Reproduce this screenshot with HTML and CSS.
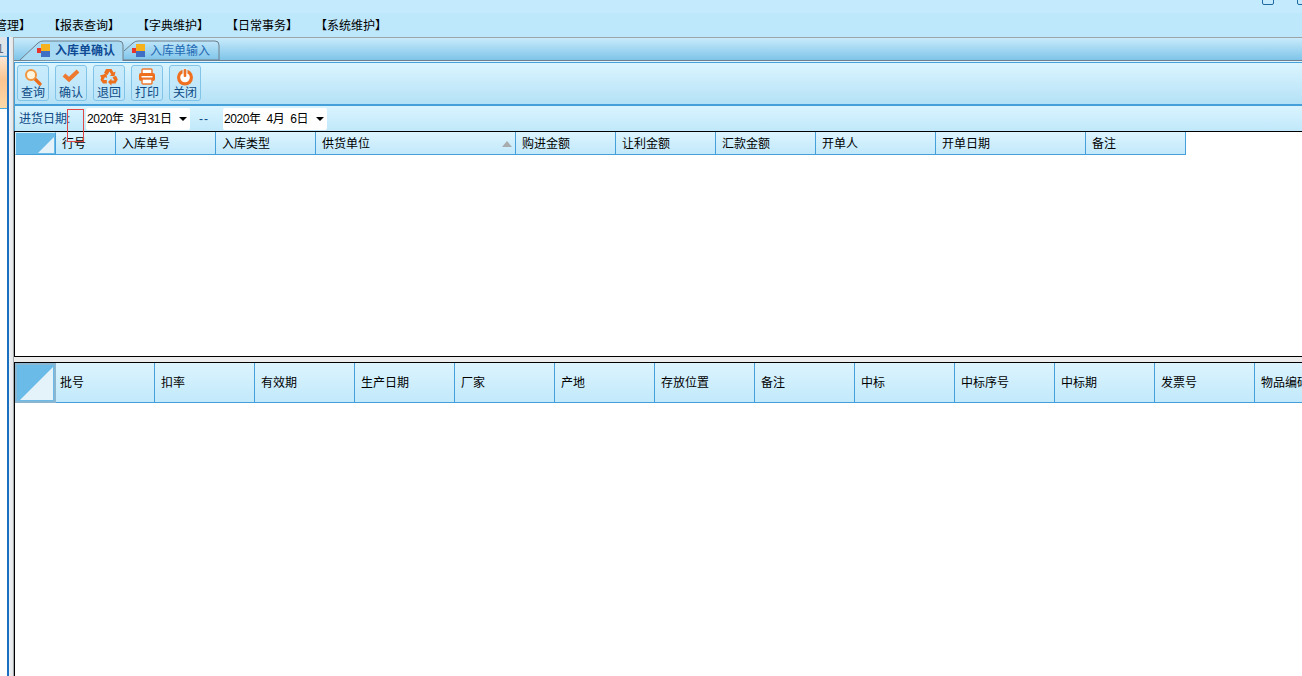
FILE: index.html
```html
<!DOCTYPE html>
<html lang="zh-CN">
<head>
<meta charset="utf-8">
<title>入库单确认</title>
<link rel="stylesheet" href="styles.css">
</head>
<body>
<div class="app">
  <div class="titlebar">
    <span class="win-btn win-min"></span>
    <span class="win-btn win-restore"></span>
  </div>
  <nav class="menu">
    <span class="menu-item">【库存管理】</span>
    <span class="menu-item">【报表查询】</span>
    <span class="menu-item">【字典维护】</span>
    <span class="menu-item">【日常事务】</span>
    <span class="menu-item">【系统维护】</span>
  </nav>
  <div class="main">
    <aside class="sidebar">
      <div class="side-head">1</div>
      <div class="side-orange"></div>
      <div class="side-body"></div>
    </aside>
    <div class="splitter-v"></div>
    <section class="content">
      <div class="tabs">
        <div class="tab tab-active">
          <svg class="tab-shape" width="104" height="23" viewBox="0 0 104 23"><path d="M0 22 L18 5 Q20 3 23 3 H99 Q103 3 103 7 V23" fill="#a9daf3" stroke="#6f7f8a"/></svg>
          <svg class="tab-icon" width="14" height="14" viewBox="0 0 14 14"><rect x="0" y="4" width="5" height="5" fill="#e8352c"/><rect x="4" y="0" width="9" height="7" fill="#f5b21c"/><rect x="4" y="7" width="9" height="6" fill="#3f6fc4"/></svg>
          <span class="tab-label">入库单确认</span>
        </div>
        <div class="tab tab-next">
          <svg class="tab-shape" width="97" height="23" viewBox="0 0 97 23"><path d="M1 13 L10 5 Q12 3 15 3 H92 Q96 3 96 7 V22 H0" fill="none" stroke="#6f7f8a"/></svg>
          <svg class="tab-icon" width="14" height="14" viewBox="0 0 14 14"><rect x="0" y="4" width="5" height="5" fill="#e8352c"/><rect x="4" y="0" width="9" height="7" fill="#f5b21c"/><rect x="4" y="7" width="9" height="6" fill="#3f6fc4"/></svg>
          <span class="tab-label">入库单输入</span>
        </div>
      </div>
      <div class="toolbar">
        <button class="tool-btn">
          <svg width="18" height="18" viewBox="0 0 18 18"><line x1="10.5" y1="10.5" x2="16" y2="16" stroke="#ea6d1c" stroke-width="3.2" stroke-linecap="round"/><circle cx="7" cy="7" r="5" fill="#fff4dc" stroke="#f0963e" stroke-width="2"/></svg>
          <span>查询</span>
        </button>
        <button class="tool-btn">
          <svg width="18" height="18" viewBox="0 0 18 18"><path d="M2 7 L7 11.5 L16 3" fill="none" stroke="#ee7a30" stroke-width="4"/></svg>
          <span>确认</span>
        </button>
        <button class="tool-btn">
          <svg width="18" height="18" viewBox="0 0 18 18"><g fill="#ee6f1c"><path d="M6 1 H11.5 L13.5 4.5 L15.5 3.5 L14.5 8.5 L9.5 7.5 L11.3 6.4 L9.5 3.4 L7.5 7 L4 5 Z"/><path d="M12.5 9.5 L16 7.8 L17.8 11.5 L15.5 15.5 H11.5 V17.8 L8 14 L11.5 10.5 V12.5 H14.5 Z"/><path d="M3.5 6.5 L0 7.5 L1.2 9.5 L0.5 12 L3 15.5 H6.8 V12 H3.5 L5 9 L7 10 L6.5 5 Z"/></g></svg>
          <span>退回</span>
        </button>
        <button class="tool-btn">
          <svg width="18" height="18" viewBox="0 0 18 18"><rect x="4" y="1" width="10" height="5" rx="1" fill="#fff" stroke="#ee7a30" stroke-width="1.5"/><rect x="1" y="5" width="16" height="8" rx="2" fill="#ee6f1c"/><rect x="3.5" y="8" width="11" height="1.5" fill="#fff"/><rect x="4" y="11" width="10" height="5" rx="1" fill="#fff" stroke="#ee7a30" stroke-width="1.5"/></svg>
          <span>打印</span>
        </button>
        <button class="tool-btn">
          <svg width="18" height="18" viewBox="0 0 18 18"><circle cx="9" cy="9.5" r="8" fill="#ef7020"/><circle cx="9" cy="9.5" r="4.8" fill="#fff"/><rect x="6.5" y="0" width="5" height="5" fill="#d9f1fc"/><rect x="7.7" y="1" width="2.6" height="8" rx="1" fill="#ef7020"/></svg>
          <span>关闭</span>
        </button>
      </div>
      <div class="filter">
        <span class="filter-label">进货日期:</span>
        <div class="date-box"><span class="date-text">2020年&nbsp; 3月31日</span><i class="caret"></i></div>
        <span class="dash">--</span>
        <div class="date-box"><span class="date-text">2020年&nbsp; 4月&nbsp; 6日</span><i class="caret"></i></div>
        <div class="focus-mark"></div>
      </div>
      <div class="grid grid-top">
        <div class="grid-head head-small">
          <div class="corner"><svg class="corner-tri" viewBox="0 0 20 20" preserveAspectRatio="none"><path d="M0 20 L20 0 V20 Z" fill="#e4f2f9"/></svg></div>
          <div class="cell w60">行号</div>
          <div class="cell w100">入库单号</div>
          <div class="cell w100">入库类型</div>
          <div class="cell w200">供货单位<i class="sort-up"></i></div>
          <div class="cell w100">购进金额</div>
          <div class="cell w100">让利金额</div>
          <div class="cell w100">汇款金额</div>
          <div class="cell w120">开单人</div>
          <div class="cell w150">开单日期</div>
          <div class="cell w100">备注</div>
        </div>
      </div>
      <div class="splitter-h"></div>
      <div class="grid grid-bottom">
        <div class="grid-head head-tall">
          <div class="corner"><svg class="corner-tri" viewBox="0 0 20 20" preserveAspectRatio="none"><path d="M0 20 L20 0 V20 Z" fill="#e4f2f9"/></svg></div>
          <div class="cell w99">批号</div>
          <div class="cell w100">扣率</div>
          <div class="cell w100">有效期</div>
          <div class="cell w100">生产日期</div>
          <div class="cell w100">厂家</div>
          <div class="cell w100">产地</div>
          <div class="cell w100">存放位置</div>
          <div class="cell w100">备注</div>
          <div class="cell w100">中标</div>
          <div class="cell w100">中标序号</div>
          <div class="cell w100">中标期</div>
          <div class="cell w100">发票号</div>
          <div class="cell w100">物品编码</div>
        </div>
      </div>
    </section>
  </div>
</div>
</body>
</html>
```
FILE: styles.css
```css
* { box-sizing: border-box; }
html, body { margin: 0; padding: 0; height: 100%; overflow: hidden; background: #fff; }
body { font: 12px/1 "Liberation Sans", "Noto Sans CJK SC", sans-serif; color: #000; }

.app { width: 1302px; height: 676px; display: flex; flex-direction: column; overflow: hidden; }

.titlebar { height: 13px; flex: none; background: #c3ebfd; display: flex; justify-content: flex-end; gap: 23px; margin-right: -7px; overflow: hidden; }
.win-btn { display: block; width: 12px; height: 11px; margin-top: -6px; border: 1.5px solid #1f6a9e; border-radius: 2px; }

.menu { height: 24px; flex: none; background: #bde7fa; display: flex; align-items: center; gap: 17px; margin-left: -41px; padding-top: 1px; }
.menu-item { width: 72px; flex: none; white-space: nowrap; }

.main { flex: 1; display: flex; min-height: 0; }

.sidebar { width: 9px; flex: none; display: flex; flex-direction: column; border-right: 2px solid #1a6fc0; background: #fff; overflow: hidden; }
.side-head { height: 19px; flex: none; background: #dfe4e8; color: #5b6b7a; padding: 6px 0 0 0; border-bottom: 1px solid #b9d8ea; text-indent: -3px; }
.side-orange { height: 52px; flex: none; border-top: 1px solid #4ba6dc; background: linear-gradient(#fde6d2 0%, #fbc590 45%, #fdd9a8 100%); }
.side-body { flex: 1; border-top: 1px solid #4ba6dc; }

.splitter-v { width: 5px; flex: none; background: linear-gradient(90deg, #eef3f6, #e4e6e8); border-right: 1px solid #a4a8ab; }

.content { flex: 1; min-width: 0; display: flex; flex-direction: column; overflow: hidden; }

.tabs { height: 25px; flex: none; display: flex; padding: 0 0 0 6px; position: relative; border-top: 1px solid #a0a4a8; background: linear-gradient(#c8ebfb 0, #7fc4e9 22px, #dff5ff 23px, #dff5ff 100%); }
.tabs::after { content: ""; position: absolute; left: 0; right: 0; top: 22px; height: 1px; background: #6f7f8a; }
.tab { position: relative; height: 23px; display: flex; align-items: center; z-index: 1; color: #12529e; }
.tab-shape { position: absolute; left: 0; top: 0; }
.tab-icon { position: relative; flex: none; margin-top: 2px; }
.tab-active { width: 104px; padding-left: 17px; z-index: 2; }
.tab-active .tab-label { font-weight: 700; color: #0f4a94; }
.tab-next { width: 97px; margin-left: -1px; padding-left: 9px; }
.tab-next .tab-label { color: #2369b4; }
.tab-label { position: relative; margin-left: 4px; margin-top: 2px; white-space: nowrap; }

.toolbar { height: 44px; flex: none; display: flex; gap: 6px; padding: 2px 0 0 2px; border-top: 1px solid #45a0da; border-bottom: 2px solid #45a0da; border-left: 1px solid #45a0da; background: linear-gradient(#dbf5ff, #b4e1f6); }
.tool-btn { width: 32px; height: 36px; padding: 2px 0 0; display: flex; flex-direction: column; align-items: center; border: 1px solid #82c3e8; border-radius: 3px; background: rgba(190, 230, 250, .55); color: #0f4a86; font: inherit; }
.tool-btn svg { flex: none; display: block; }
.tool-btn span { margin-top: 1px; white-space: nowrap; }

.filter { height: 25px; flex: none; display: flex; align-items: center; position: relative; padding-left: 4px; border-left: 1px solid #45a0da; background: linear-gradient(#daf4ff, #c0e8fa); color: #0f4a86; }
.filter-label { width: 67px; flex: none; white-space: nowrap; }
.date-box { width: 104px; height: 22px; flex: none; background: #fff; display: flex; align-items: center; justify-content: space-between; padding: 0 3px 0 1px; color: #000; border-radius: 2px; }
.date-text { letter-spacing: -0.4px; white-space: nowrap; }
.caret { width: 0; height: 0; border: 4px solid transparent; border-top: 4px solid #000; border-bottom: 0; }
.dash { width: 33px; flex: none; padding-left: 9px; letter-spacing: 1px; }
.focus-mark { position: absolute; left: 52px; top: 3px; width: 17px; height: 33px; border: 1px solid #e04848; z-index: 5; }

.grid { flex: none; background: #fff; border-left: 1px solid #000; overflow: hidden; }
.grid-top { height: 226px; border-top: 1px solid #000; border-bottom: 1px solid #000; }
.grid-bottom { flex: 1; border-top: 1px solid #000; }
.grid-head { display: flex; width: max-content; }
.head-small { height: 23px; }
.head-tall { height: 40px; }

.corner { width: 41px; flex: none; padding: 1px; background: #6bbbe8; border: 1px solid #d4eefa; border-right: 1px solid #45a0da; border-bottom: 1px solid #45a0da; display: flex; justify-content: flex-end; align-items: flex-end; }
.corner-tri { width: 16px; height: 16px; display: block; }
.head-tall .corner-tri { width: 33px; height: 33px; }
.head-tall .corner { border: 2px solid #8ab6d2; padding: 1px; background: #6bbbe8; }

.cell { flex: none; position: relative; display: flex; align-items: center; padding: 1px 0 0 6px; white-space: nowrap; border-right: 1px solid #45a0da; border-bottom: 1px solid #45a0da; background: linear-gradient(#dcf4fe, #c2e9fb); }
.w60 { width: 60px; }
.w99 { width: 99px; padding-left: 4px; }
.w100 { width: 100px; }
.w120 { width: 120px; }
.w150 { width: 150px; }
.w200 { width: 200px; }
.sort-up { position: absolute; right: 3px; top: 9px; width: 0; height: 0; border: 5px solid transparent; border-bottom: 6px solid #a8acae; border-top: 0; }

.splitter-h { height: 5px; flex: none; background: #ececec; }
```
